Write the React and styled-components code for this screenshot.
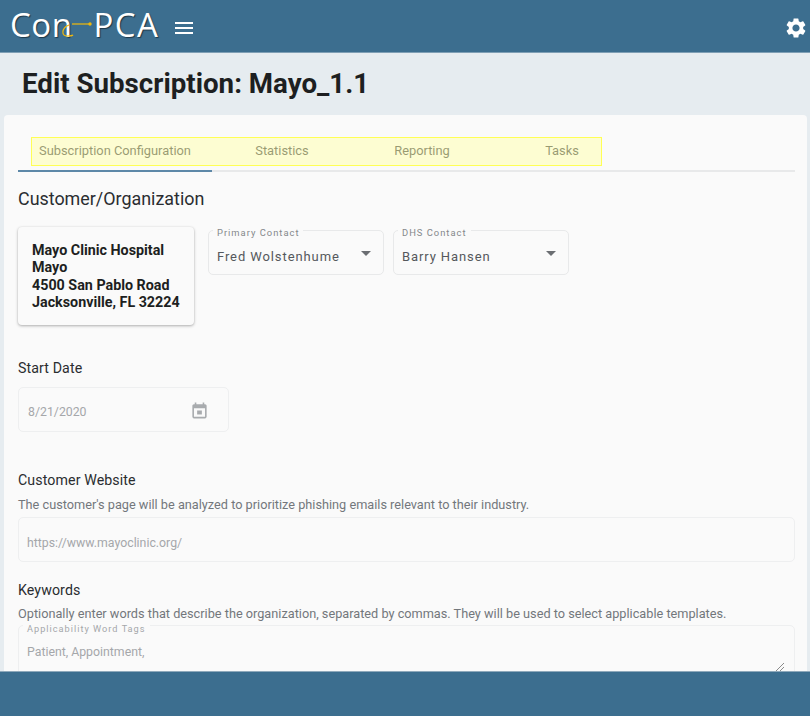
import React from "react";
import styled, { createGlobalStyle } from "styled-components";
import { MdMenu, MdSettings, MdArrowDropDown } from "react-icons/md";

const tabs = [
  { label: "Subscription Configuration", width: 194, active: true },
  { label: "Statistics", width: 140 },
  { label: "Reporting", width: 140 },
  { label: "Tasks", width: 140 },
];

const App = () => {
  return (
    <Page>
      <GlobalStyle />
      <Header>
        <HeaderLeft>
          <Logo>
            <LogoText>Con</LogoText>
            <LogoHook viewBox="0 0 21 24" aria-hidden="true">
              <path d="M0 11 H18" stroke="#f0b90b" strokeWidth="1.2" fill="none" />
              <circle cx="18" cy="11" r="1.7" fill="#f0b90b" />
              <path d="M-3 12 C-11 15 -11 24 -4 23 C-2 23 0 23 1 22" stroke="#f0b90b" strokeWidth="1.2" fill="none" />
            </LogoHook>
            <PcaText>PCA</PcaText>
          </Logo>
          <MenuIcon />
        </HeaderLeft>
        <GearIcon />
      </Header>
      <Main>
        <Title>Edit Subscription: Mayo_1.1</Title>
        <Card>
          <TabBar>
            {tabs.map((tab) => (
              <Tab key={tab.label} width={tab.width} $active={tab.active}>
                {tab.label}
              </Tab>
            ))}
            <Highlight />
          </TabBar>

          <SectionTitle>Customer/Organization</SectionTitle>
          <OrgRow>
            <OrgCard>
              <div>Mayo Clinic Hospital</div>
              <div>Mayo</div>
              <div>4500 San Pablo Road</div>
              <div>Jacksonville, FL 32224</div>
            </OrgCard>
            <SelectBox $first>
              <Legend>Primary Contact</Legend>
              <SelectValue>Fred Wolstenhume</SelectValue>
              <SelectArrow />
            </SelectBox>
            <SelectBox>
              <Legend>DHS Contact</Legend>
              <SelectValue>Barry Hansen</SelectValue>
              <SelectArrow />
            </SelectBox>
          </OrgRow>

          <DateLabel>Start Date</DateLabel>
          <DateField>
            <DateText>8/21/2020</DateText>
            <CalendarIcon viewBox="0 0 24 24" aria-hidden="true">
              <path d="M19 4h-1V2h-2v2H8V2H6v2H5c-1.1 0-2 .9-2 2v14c0 1.1.9 2 2 2h14c1.1 0 2-.9 2-2V6c0-1.1-.9-2-2-2zm0 16H5V9h14v11z" />
              <path d="M9 12h6v5H9z" />
            </CalendarIcon>
          </DateField>

          <WebsiteLabel>Customer Website</WebsiteLabel>
          <Hint>The customer's page will be analyzed to prioritize phishing emails relevant to their industry.</Hint>
          <WideField>
            <InputText>https://www.mayoclinic.org/</InputText>
          </WideField>

          <KeywordsLabel>Keywords</KeywordsLabel>
          <KeywordsHint>Optionally enter words that describe the organization, separated by commas. They will be used to select applicable templates.</KeywordsHint>
          <TagsField>
            <TagsLegend>Applicability Word Tags</TagsLegend>
            <InputText>Patient, Appointment,</InputText>
            <Resizer viewBox="0 0 10 10" aria-hidden="true">
              <path d="M1 9 L9 1 M5 9 L9 5" stroke="#8a8a8a" strokeWidth="1" fill="none" />
            </Resizer>
          </TagsField>
        </Card>
      </Main>
      <Footer />
    </Page>
  );
};

export default App;

const GlobalStyle = createGlobalStyle`
  html, body {
    margin: 0;
    padding: 0;
    height: 100%;
    overflow: hidden;
  }
  * {
    box-sizing: border-box;
  }
  body {
    font-family: Roboto, "Liberation Sans", sans-serif;
  }
`;

const Page = styled.div`
  width: 810px;
  height: 716px;
  display: flex;
  flex-direction: column;
  background-color: #e6ecf0;
`;

const Header = styled.header`
  flex: 0 0 53px;
  display: flex;
  align-items: center;
  justify-content: space-between;
  padding: 0 2px 0 10px;
  background-color: #3c6e8f;
  border-bottom: 1px solid #7f9fb5;
`;

const HeaderLeft = styled.div`
  display: flex;
  align-items: center;
`;

const Logo = styled.div`
  display: flex;
  align-items: center;
  height: 40px;
  margin-top: -2px;
`;

const LogoText = styled.span`
  font-family: "Open Sans", sans-serif;
  font-weight: 400;
  font-size: 33px;
  line-height: 40px;
  color: #fff;
  letter-spacing: 0.5px;
  text-shadow: 1px 1px 1px rgba(0, 0, 0, 0.5);
`;

const PcaText = styled(LogoText)`
  letter-spacing: 1.5px;
`;

const LogoHook = styled.svg`
  width: 21px;
  height: 24px;
  overflow: visible;
`;

const MenuIcon = styled(MdMenu)`
  width: 24px;
  height: 24px;
  margin: 4px 0 0 13px;
  color: #fff;
`;

const GearIcon = styled(MdSettings)`
  width: 24px;
  height: 24px;
  margin-top: 4px;
  color: #fff;
`;

const Main = styled.main`
  flex: 1;
  min-height: 0;
  overflow: hidden;
  padding: 0 3px 0 4px;
`;

const Title = styled.h1`
  margin: 0;
  padding: 14px 0 0 18px;
  height: 62px;
  font-size: 27.7px;
  line-height: 33px;
  font-weight: 700;
  color: #1d1f21;
`;

const Card = styled.section`
  background-color: #fafafa;
  border-radius: 4px 4px 0 0;
  padding: 22px 12px 0 14px;
  height: 600px;
`;

const TabBar = styled.div`
  position: relative;
  display: flex;
  height: 35px;
  border-bottom: 2px solid #e8e9ea;
`;

const Tab = styled.div`
  width: ${(props) => props.width}px;
  height: 35px;
  padding-bottom: 7px;
  display: flex;
  align-items: center;
  justify-content: center;
  font-size: 12.85px;
  font-weight: 400;
  color: #33363a;
  border-bottom: 2px solid ${(props) => (props.$active ? "#5d88a8" : "transparent")};
`;

const Highlight = styled.div`
  position: absolute;
  left: 13px;
  top: 0;
  width: 571px;
  height: 29px;
  background-color: rgba(255, 255, 170, 0.5);
  border: 1px solid #ffff55;
`;

const SectionTitle = styled.h2`
  margin: 15px 0 0;
  font-size: 17.9px;
  line-height: 24px;
  font-weight: 400;
  color: #2a2d30;
`;

const OrgRow = styled.div`
  display: flex;
  align-items: flex-start;
  margin-top: 16px;
`;

const OrgCard = styled.div`
  width: 176px;
  height: 98px;
  padding: 14.5px 0 0 14px;
  background-color: #fafafa;
  border-radius: 4px;
  box-shadow: 0 1px 3px rgba(0, 0, 0, 0.3), 0 0 2px rgba(0, 0, 0, 0.06);
  font-size: 14.3px;
  line-height: 17.5px;
  font-weight: 700;
  color: #1d1f21;
`;

const SelectBox = styled.div`
  position: relative;
  width: 176px;
  height: 45px;
  margin: 3px 0 0 ${(props) => (props.$first ? "14px" : "9px")};
  border: 1px solid #e8e9ea;
  border-radius: 5px;
  padding: 17px 0 0 8px;
`;

const Legend = styled.span`
  position: absolute;
  left: 4px;
  top: -4px;
  padding: 0 4px;
  background-color: #fafafa;
  font-size: 9.4px;
  line-height: 11px;
  letter-spacing: 1px;
  color: #85888b;
`;

const SelectValue = styled.div`
  font-size: 13px;
  line-height: 17px;
  letter-spacing: 0.9px;
  color: #55585c;
`;

const SelectArrow = styled(MdArrowDropDown)`
  position: absolute;
  right: 5px;
  top: 10px;
  width: 24px;
  height: 24px;
  color: #6b6e72;
`;

const FieldLabel = styled.div`
  font-size: 14.2px;
  line-height: 18px;
  letter-spacing: 0.1px;
  color: #2a2d30;
`;

const DateLabel = styled(FieldLabel)`
  margin-top: 34px;
`;

const WebsiteLabel = styled(FieldLabel)`
  margin-top: 39px;
`;

const KeywordsLabel = styled(FieldLabel)`
  margin-top: 19px;
`;

const Hint = styled.div`
  margin-top: 7px;
  font-size: 12.73px;
  line-height: 18px;
  color: #73777c;
`;

const KeywordsHint = styled(Hint)`
  margin-top: 6px;
`;

const Field = styled.div`
  display: flex;
  align-items: center;
  justify-content: space-between;
  height: 45px;
  border: 1px solid #eeeff0;
  border-radius: 5px;
  padding: 0 8px;
`;

const DateField = styled(Field)`
  width: 211px;
  margin-top: 10px;
  padding: 2px 19px 0 9px;
`;

const WideField = styled(Field)`
  margin-top: 3px;
  padding-top: 8px;
`;

const TagsField = styled(Field)`
  position: relative;
  height: 80px;
  margin-top: 2px;
  align-items: flex-start;
  padding-top: 18px;
`;

const TagsLegend = styled(Legend)`
  top: -3px;
  font-size: 9.2px;
  color: #a5a7aa;
`;

const InputText = styled.span`
  font-size: 12.3px;
  line-height: 17px;
  color: #a5a7aa;
`;

const DateText = styled(InputText)`
  margin-top: 4px;
`;

const CalendarIcon = styled.svg`
  width: 19px;
  height: 19px;
  fill: #a8abae;
`;

const Resizer = styled.svg`
  position: absolute;
  right: 9px;
  top: 36px;
  width: 10px;
  height: 10px;
`;

const Footer = styled.footer`
  flex: 0 0 45px;
  position: relative;
  background-color: #3c6e8f;
  border-top: 1px solid #8fa9bb;
`;
